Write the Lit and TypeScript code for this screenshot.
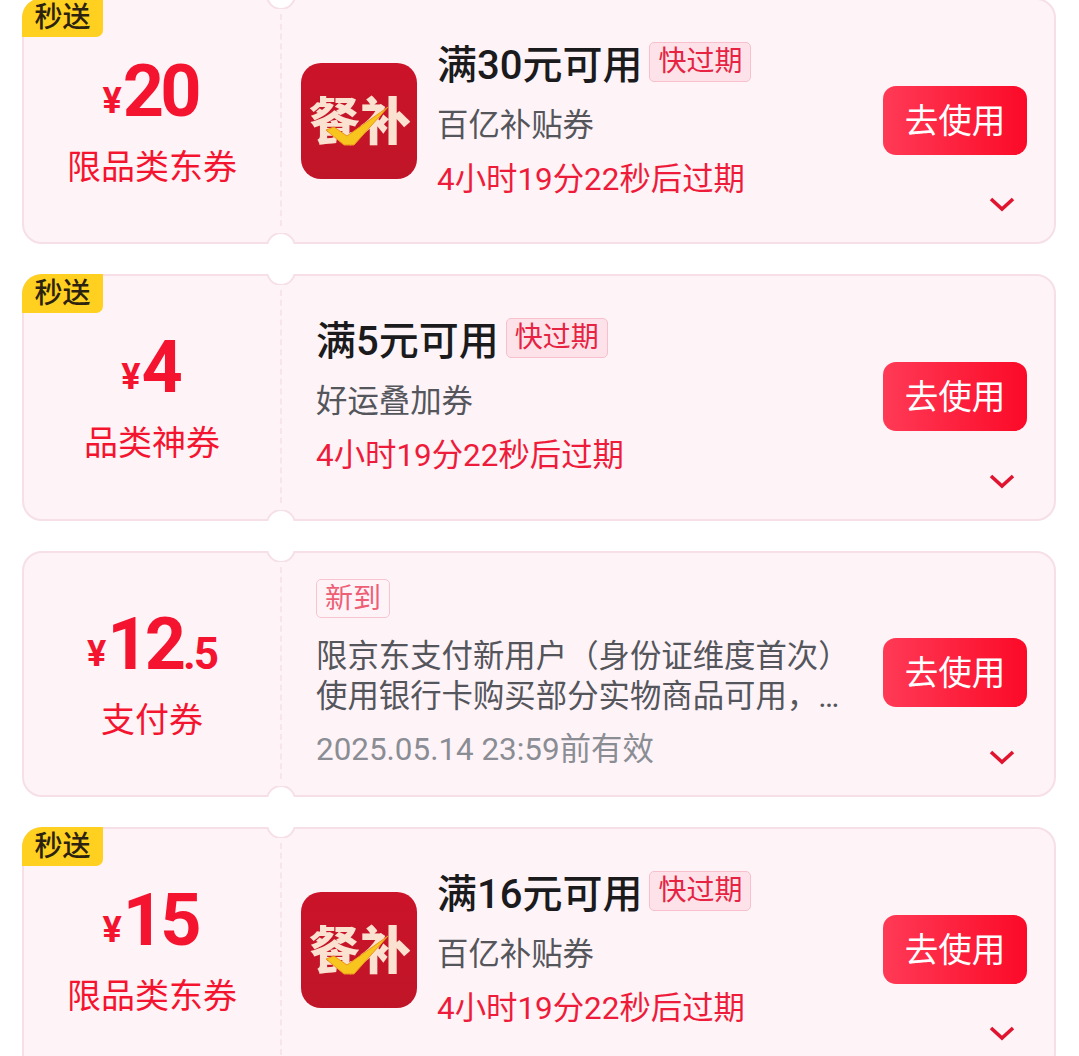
import { LitElement, html, css, nothing } from 'lit';
import { customElement, property } from 'lit/decorators.js';

interface Coupon {
  whole: string;
  fraction?: string;
  label: string;
  express?: boolean;
  logo?: boolean;
  title?: string;
  sub?: string;
  expiry?: string;
  desc?: string[];
  date?: string;
}

const COUPONS: Coupon[] = [
  { whole: '20', label: '限品类东券', express: true, logo: true, title: '满30元可用', sub: '百亿补贴券', expiry: '4小时19分22秒后过期' },
  { whole: '4', label: '品类神券', express: true, title: '满5元可用', sub: '好运叠加券', expiry: '4小时19分22秒后过期' },
  {
    whole: '12',
    fraction: '.5',
    label: '支付券',
    desc: ['限京东支付新用户（身份证维度首次）', '使用银行卡购买部分实物商品可用，…'],
    date: '2025.05.14 23:59前有效',
  },
  { whole: '15', label: '限品类东券', express: true, logo: true, title: '满16元可用', sub: '百亿补贴券', expiry: '4小时19分22秒后过期' },
];

@customElement('coupon-card')
export class CouponCard extends LitElement {
  static styles = css`
    :host {
      display: block;
    }

    .card {
      position: relative;
      display: flex;
      box-sizing: border-box;
      height: 246.33px;
      background: #fef4f8;
      border: 2px solid #f6dfe6;
      border-radius: 20px;
      font-family: Roboto, 'Noto Sans CJK SC', sans-serif;
    }

    .express {
      position: absolute;
      left: -2px;
      top: -2px;
      width: 81px;
      height: 39px;
      background: #ffd01f;
      border-radius: 20px 0 7px 0;
      color: #2b2210;
      font-size: 28px;
      font-weight: 500;
      line-height: 39px;
      text-align: center;
    }

    .notch {
      position: absolute;
      left: 240px;
      width: 34px;
      height: 11px;
      overflow: hidden;
    }

    .notch::before {
      content: '';
      position: absolute;
      left: 2px;
      box-sizing: border-box;
      width: 30px;
      height: 30px;
      border-radius: 50%;
      background: #fff;
      border: 2px solid #f6dfe6;
    }

    .notch.top {
      top: -2px;
    }

    .notch.top::before {
      bottom: -1px;
    }

    .notch.bottom {
      bottom: -2px;
    }

    .notch.bottom::before {
      top: -1px;
    }

    .value {
      flex: none;
      width: 256px;
      display: flex;
      flex-direction: column;
      align-items: center;
      padding-top: 50px;
      box-sizing: border-box;
      color: #f5142f;
    }

    .amount {
      display: flex;
      align-items: baseline;
      height: 84px;
      line-height: 84px;
      font-weight: 700;
    }

    .yen {
      font-size: 36px;
      margin-right: 1px;
      transform: translateY(-3px);
    }

    .whole {
      font-size: 72px;
      letter-spacing: -4px;
      margin-right: 4px;
    }

    .fraction {
      margin-left: -3px;
      font-size: 44px;
      letter-spacing: -2px;
    }

    .label {
      margin-top: 11px;
      font-size: 34px;
      line-height: 44px;
    }

    .divider {
      flex: none;
      width: 0;
      margin: 14px 0 16px;
      border-left: 2px dashed #f9e4ea;
    }

    .body {
      flex: 1;
      min-width: 0;
      display: flex;
      align-items: center;
      padding-left: 19px;
    }

    .logo {
      flex: none;
      display: block;
      width: 116px;
      height: 116px;
      margin-right: 20px;
    }

    .logo text {
      font-family: 'Noto Sans CJK SC', sans-serif;
      font-size: 51px;
      font-weight: 900;
      fill: #fbe2d0;
    }

    .info {
      width: 532px;
    }

    .info.plain {
      margin-left: 15px;
    }

    .info.offer {
      margin-top: 2px;
    }

    .head {
      display: flex;
      align-items: center;
      gap: 7px;
    }

    .title {
      color: #1b1b1d;
      font-size: 40px;
      font-weight: 500;
      line-height: 48px;
    }

    .tag {
      box-sizing: border-box;
      height: 40px;
      margin-bottom: 8px;
      padding: 0 8px;
      background: #fde3e9;
      border: 1px solid #f8c0cc;
      border-radius: 5px;
      color: #e62343;
      font-size: 28px;
      line-height: 37px;
    }

    .sub {
      margin-top: 16px;
      color: #55565c;
      font-size: 31.4px;
      line-height: 40px;
    }

    .expiry {
      margin-top: 14px;
      color: #ee1c3a;
      font-size: 31.4px;
      line-height: 40px;
    }

    .new {
      display: inline-block;
      box-sizing: border-box;
      height: 39px;
      padding: 0 8px;
      border: 1px solid #f7c5d0;
      border-radius: 5px;
      color: #ee5f76;
      font-size: 28px;
      line-height: 37px;
      vertical-align: top;
    }

    .desc {
      margin-top: 19px;
      color: #55565c;
      font-size: 31.4px;
      line-height: 40px;
      white-space: nowrap;
    }

    .date {
      margin-top: 13px;
      color: #8b8d94;
      font-size: 31.4px;
      line-height: 40px;
    }

    .action {
      flex: none;
      align-self: stretch;
      display: grid;
      grid-template-rows: 1fr auto 1fr;
      width: 144px;
      margin-left: auto;
      margin-right: 27px;
      padding-bottom: 2px;
    }

    .use {
      grid-row: 2;
      height: 69px;
      border-radius: 13px;
      background: linear-gradient(90deg, #ff3a56, #fb0a28);
      color: #fff;
      font-size: 33.6px;
      line-height: 72px;
      text-align: center;
    }

    .chevron {
      grid-row: 3;
      justify-self: end;
      align-self: end;
      display: block;
      width: 26px;
      height: 16px;
      margin-right: 12px;
      margin-bottom: 28px;
    }
  `;

  @property({ attribute: false })
  coupon!: Coupon;

  private renderLogo() {
    return html`
      <svg class="logo" viewBox="0 0 116 116">
        <defs>
          <linearGradient id="logo-bg" x1="0" y1="0" x2="0" y2="1">
            <stop offset="0" stop-color="#cb1329"></stop>
            <stop offset="1" stop-color="#c01528"></stop>
          </linearGradient>
        </defs>
        <rect width="116" height="116" rx="20" fill="url(#logo-bg)"></rect>
        <text x="8" y="77">餐补</text>
        <polygon
          points="25,67 33,64 46,73 87,44 53,82 43,82"
          fill="#f8c51f"
          stroke="#ec951d"
          stroke-width="1"
        ></polygon>
      </svg>
    `;
  }

  private renderInfo(c: Coupon) {
    if (c.desc) {
      return html`
        <div class="info plain offer">
          <span class="new">新到</span>
          <div class="desc">${c.desc.map((line) => html`<div>${line}</div>`)}</div>
          <div class="date">${c.date}</div>
        </div>
      `;
    }
    return html`
      <div class="info ${c.logo ? '' : 'plain'}">
        <div class="head">
          <span class="title">${c.title}</span>
          <span class="tag">快过期</span>
        </div>
        <div class="sub">${c.sub}</div>
        <div class="expiry">${c.expiry}</div>
      </div>
    `;
  }

  render() {
    const c = this.coupon;
    return html`
      <div class="card">
        <div class="value">
          <div class="amount">
            <span class="yen">¥</span>
            <span class="whole">${c.whole}</span>
            ${c.fraction ? html`<span class="fraction">${c.fraction}</span>` : nothing}
          </div>
          <div class="label">${c.label}</div>
        </div>
        <div class="divider"></div>
        <div class="body">
          ${c.logo ? this.renderLogo() : nothing}
          ${this.renderInfo(c)}
          <div class="action">
            <div class="use">去使用</div>
            <svg class="chevron" viewBox="0 0 26 16">
              <path d="M2 3l11 10L24 3" fill="none" stroke="#e0142f" stroke-width="3.6"></path>
            </svg>
          </div>
        </div>
        <span class="notch top"></span>
        <span class="notch bottom"></span>
        ${c.express ? html`<div class="express">秒送</div>` : nothing}
      </div>
    `;
  }
}

@customElement('app-root')
export class AppRoot extends LitElement {
  static styles = css`
    :host {
      display: block;
      height: 1056px;
      overflow: hidden;
      background: #fff;
    }

    .list {
      display: flex;
      flex-direction: column;
      gap: 30px;
      margin-top: -2px;
      padding: 0 23px 0 22px;
    }
  `;

  render() {
    return html`
      <div class="list">
        ${COUPONS.map((c) => html`<coupon-card .coupon=${c}></coupon-card>`)}
      </div>
    `;
  }
}

declare global {
  interface HTMLElementTagNameMap {
    'app-root': AppRoot;
    'coupon-card': CouponCard;
  }
}
